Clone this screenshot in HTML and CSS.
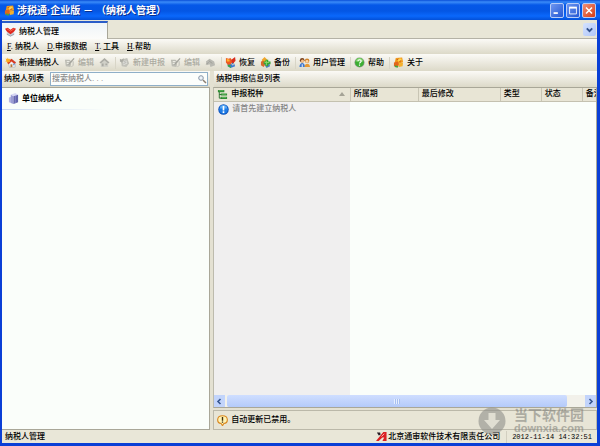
FILE: index.html
```html
<!DOCTYPE html>
<html lang="zh-CN">
<head>
<meta charset="utf-8">
<title>涉税通·企业版 - (纳税人管理)</title>
<link rel="stylesheet" href="styles.css">
</head>
<body>
<svg class="defs" aria-hidden="true">
  <symbol id="i-app" viewBox="0 0 12 12">
    <path d="M3 1l7-.5 1 5-5 2-4-2z" fill="#f39a1c"/><path d="M4 2l5-.4.6 2.6-3.4 1z" fill="#ffd34a"/>
    <path d="M1 6l4-1 2 3-2 3-4-1z" fill="#e2651b"/><path d="M6 7l5-1-.5 4-4 1z" fill="#f4b02b"/><path d="M2 9l4 1-1 1.600-3-.6z" fill="#46a53a"/>
    <path d="M4 3l2-1M7 5l2-1" stroke="#b83510" stroke-width=".9"/>
  </symbol>
  <symbol id="i-tab" viewBox="0 0 12 12">
    <path d="M2 7l4-2 4 2 0 2-4 2.500L2 9z" fill="#c9ccd4"/><path d="M2 9l4 2 4-2" fill="none" stroke="#8c909c" stroke-width=".8"/>
    <path d="M0 3l3-1 3 2 3-2 3 1-2 3-4 3-4-3z" fill="#e0271d"/><path d="M2 3l4 2.500 4-2.500" stroke="#ff8a6a" fill="none" stroke-width=".7"/>
  </symbol>
  <symbol id="i-new" viewBox="0 0 12 12">
    <path d="M3 5l5-2 4 3-1 5-6 .500z" fill="#eef0f4" stroke="#9aa0a8" stroke-width=".5"/><path d="M2 6l5-4 5 4-1.500 1.500L7 5 4 8z" fill="#d93a20"/>
    <path d="M3 .5l.8 1.700 2-.2L5 3.800l1 1.700-2-.2-1 1.700-.8-1.900L.3 5l1.200-1.500L.6 1.700l1.800.4z" fill="#ffae1c"/><path d="M6 8h2v3H6z" fill="#b97634"/><path d="M9 7h1.500v2H9z" fill="#568ac8"/>
  </symbol>
  <symbol id="i-edit" viewBox="0 0 12 12">
    <path d="M1 3l5 0 2 2-1 6-5-1z" fill="#bcbcb4"/><path d="M3 5h3M3 7h4" stroke="#f4f4ec"/><path d="M10.500 1l1 1-5 6-2 .7.700-2z" fill="#a4a49d"/><path d="M9 4l1 1v4l-2 2" fill="none" stroke="#bbbbb4"/>
  </symbol>
  <symbol id="i-house" viewBox="0 0 12 12">
    <path d="M2 6l4-3 4 3v5H2z" fill="#d0d0c8"/><path d="M.5 6L6 1l5.500 5-1.500 1-4-3.500L2 7z" fill="#adada6"/><path d="M3 7h2v3H3zM7 7h2v2H7z" fill="#a9a9a2"/>
  </symbol>
  <symbol id="i-doc" viewBox="0 0 12 12">
    <path d="M2 3l7-2 2 6-3 4-5-1z" fill="#c1c1b9"/><path d="M4 4l4-1 1 4-4 2z" fill="#dededa"/><path d="M1 2l2 1 2-2 0 3-2 2-2-1z" fill="#ababa4"/><path d="M5 5l3-1M5 7l3-1" stroke="#a9a9a2" stroke-width=".8"/>
  </symbol>
  <symbol id="i-send" viewBox="0 0 12 12">
    <path d="M1 5l4-3 5 3 1 4-5 2-1-3-3 1z" fill="#b9b9b2"/><path d="M4 4l4 3M1 8l3-2" stroke="#9e9e97"/>
  </symbol>
  <symbol id="i-restore" viewBox="0 0 12 12">
    <path d="M3 5l6-1 2 6-5 2-3-2z" fill="#3979d0"/><path d="M3 8l3 1 .5 3L3 10z" fill="#37a644"/><path d="M1 1l3 1 2-1 2 3-1 4-4 .500L1 6z" fill="#ee5921"/><path d="M2 2l3 1 0 2-3 0z" fill="#ffb32b"/>
    <path d="M7 3l4-3 .5 4-2 3-2-1z" fill="#d92d1d"/><path d="M7 7l1.500 2L11 5" stroke="#fff3c4" fill="none" stroke-width=".8"/>
  </symbol>
  <symbol id="i-backup" viewBox="0 0 12 12">
    <path d="M2 3l3-3 3 3-1 4H3z" fill="#f1a62a"/><path d="M1 5l3-1 2 4-2 3-3-2z" fill="#d96a2c"/><path d="M5 8l5-2 1 4-4 2z" fill="#4f7fcb"/><path d="M6 3h3v2h2.500v3H9v2H6V8H4V5h2z" fill="#36a531"/><path d="M7 4v5M5 6h5" stroke="#89d86c"/>
  </symbol>
  <symbol id="i-users" viewBox="0 0 12 12">
    <circle cx="3.500" cy="3.500" r="2.500" fill="#7a431d"/><circle cx="3.800" cy="4.300" r="1.700" fill="#f5c28f"/><path d="M.5 11c0-6 6-6 6 0z" fill="#3e78cf"/>
    <circle cx="8.800" cy="4" r="2.500" fill="#d2832a"/><circle cx="8.700" cy="4.800" r="1.600" fill="#ffd5a2"/><path d="M6 11c0-5 6-5 6 0z" fill="#e79933"/><path d="M3 8h1v3H3z" fill="#fff"/>
  </symbol>
  <symbol id="i-help" viewBox="0 0 12 12">
    <circle cx="6" cy="6" r="5.500" fill="#8c9a8b"/><circle cx="6" cy="6" r="4.800" fill="#3cae32"/><path d="M2 5a4 4 0 0 1 8 0z" fill="#7ed368"/>
    <path d="M4.200 4.700C4.300 2.400 8 2.500 7.800 4.700 7.700 5.700 6 5.800 6 7.200M6 8.200v1.300" stroke="#fff" stroke-width="1.300" fill="none"/>
  </symbol>
  <symbol id="i-cube" viewBox="0 0 12 12">
    <path d="M1 5l3-1v7l-3-1z" fill="#b6b7e2"/><path d="M3 2l3 1v9l-3-1z" fill="#9a9cd4"/><path d="M6 3l5-1v8l-5 2z" fill="#6365ac"/><path d="M3 2l5-2 3 2-5 1.500z" fill="#d7d8f4"/><path d="M8 3v8" stroke="#8789c8"/>
  </symbol>
  <symbol id="i-tree" viewBox="0 0 12 12">
    <path d="M1 1h7v2.500H1zM4 5h7v2H4zM4 8.500h7V11H4z" fill="#2f8f35"/><path d="M2.500 3v7H5M2.500 6H5" stroke="#246e2a" fill="none"/><path d="M2 1.800h5M5 5.700h5M5 9.300h5" stroke="#7cc66f" stroke-width=".6"/>
  </symbol>
  <symbol id="i-info" viewBox="0 0 12 12">
    <circle cx="6" cy="6" r="5.700" fill="#0d50b8"/><circle cx="6" cy="6" r="4.800" fill="#1d7be6"/><path d="M2 5a4 4 0 0 1 8 0z" fill="#5aa9f5"/><path d="M6 2.200v5M6 8v1.800" stroke="#fff" stroke-width="1.800"/>
  </symbol>
  <symbol id="i-warn" viewBox="0 0 12 12">
    <path d="M6 .8c7 0 6.500 8 1.500 8.500L6 11.700 4.500 9.300C-.5 8.800-1 .8 6 .8z" fill="#fff3b4" stroke="#d9871f" stroke-width="1.200"/><path d="M6 2.300v4M6 7v1.400" stroke="#43300c" stroke-width="1.500"/>
  </symbol>
  <symbol id="i-brand" viewBox="0 0 12 12">
    <path d="M1 1.500h3.500L5 4 3 5z" fill="#251b24"/><path d="M11.500 1v10H7L9 7H7L3 11H0L8 1z" fill="#db1f22"/><path d="M6 6l3-3" stroke="#fff" stroke-width=".7"/>
  </symbol>
</svg>
<div class="window">
  <header class="titlebar">
    <svg class="icon"><use href="#i-app"/></svg>
    <h1>涉税通·企业版 － （纳税人管理）</h1>
    <button class="win" aria-label="最小化"><svg viewBox="0 0 14 14"><path d="M3 10h5" stroke="#fff" stroke-width="2"/></svg></button>
    <button class="win" aria-label="最大化"><svg viewBox="0 0 14 14"><path d="M3 4h8v7H3z" fill="none" stroke="#fff"/><path d="M2.500 3.500h9" stroke="#fff" stroke-width="2"/></svg></button>
    <button class="win close" aria-label="关闭"><svg viewBox="0 0 14 14"><path d="M3.500 3.500l7 7M10.500 3.500l-7 7" stroke="#fff" stroke-width="1.800"/></svg></button>
  </header>
  <div class="tabs">
    <button class="tab"><svg class="icon"><use href="#i-tab"/></svg>纳税人管理</button>
    <button class="drop" aria-label="标签列表"><svg viewBox="0 0 12 12"><path d="M3.500 5L6 7.500 8.500 5" fill="none" stroke="#31518c" stroke-width="1.700"/></svg></button>
  </div>
  <nav class="menu">
    <button><span class="key"><u>F</u>.</span>纳税人</button>
    <button><span class="key"><u>D</u>.</span>申报数据</button>
    <button><span class="key"><u>T</u>.</span>工具</button>
    <button><span class="key"><u>H</u>.</span>帮助</button>
  </nav>
  <div class="toolbar">
    <button><svg class="icon"><use href="#i-new"/></svg>新建纳税人</button>
    <button disabled><svg class="icon"><use href="#i-edit"/></svg>编辑</button>
    <button disabled aria-label="删除"><svg class="icon"><use href="#i-house"/></svg></button>
    <span class="sep"></span>
    <button disabled><svg class="icon"><use href="#i-doc"/></svg>新建申报</button>
    <button disabled><svg class="icon"><use href="#i-edit"/></svg>编辑</button>
    <button disabled aria-label="发送"><svg class="icon"><use href="#i-send"/></svg></button>
    <span class="sep"></span>
    <button><svg class="icon"><use href="#i-restore"/></svg>恢复</button>
    <button><svg class="icon"><use href="#i-backup"/></svg>备份</button>
    <span class="sep"></span>
    <button><svg class="icon"><use href="#i-users"/></svg>用户管理</button>
    <span class="sep"></span>
    <button><svg class="icon"><use href="#i-help"/></svg>帮助</button>
    <span class="sep"></span>
    <button><svg class="icon"><use href="#i-app"/></svg>关于</button>
  </div>
  <main class="content">
    <section class="side">
      <div class="bar">
        <label for="q">纳税人列表</label>
        <div class="search">
          <input id="q" type="text" placeholder="搜索纳税人. . .">
          <svg viewBox="0 0 10 10"><circle cx="4" cy="4" r="2.300" fill="#eef4fa" stroke="#8795a6"/><path d="M6 6l3 3" stroke="#8d8072" stroke-width="1.500"/></svg>
        </div>
      </div>
      <div class="tree"><div class="node"><svg class="icon"><use href="#i-cube"/></svg>单位纳税人</div></div>
    </section>
    <section class="main">
      <h2 class="bar">纳税申报信息列表</h2>
      <div class="grid">
        <div class="rows">
          <table>
            <colgroup><col class="c1"><col class="c2"><col class="c3"><col class="c4"><col class="c4"><col></colgroup>
            <thead><tr>
              <th><div class="kind"><svg class="icon"><use href="#i-tree"/></svg>申报税种<span class="sort"></span></div></th>
              <th>所属期</th><th>最后修改</th><th>类型</th><th>状态</th><th>备注</th>
            </tr></thead>
            <tbody><tr><td><div class="kind"><svg class="icon"><use href="#i-info"/></svg>请首先建立纳税人</div></td><td></td><td></td><td></td><td></td><td></td></tr></tbody>
          </table>
        </div>
        <div class="scroll">
          <button aria-label="向左"><svg viewBox="0 0 11 11"><path d="M6.500 3L4 5.500 6.500 8" fill="none" stroke="#35558f" stroke-width="1.600"/></svg></button>
          <div class="thumb"><i></i></div>
          <button aria-label="向右"><svg viewBox="0 0 11 11"><path d="M4.500 3L7 5.500 4.500 8" fill="none" stroke="#35558f" stroke-width="1.600"/></svg></button>
        </div>
      </div>
      <div class="notice"><svg class="icon"><use href="#i-warn"/></svg>自动更新已禁用。</div>
    </section>
  </main>
  <footer class="status">
    <span class="where">纳税人管理</span>
    <span class="company"><svg class="icon"><use href="#i-brand"/></svg>北京通审软件技术有限责任公司</span>
    <time>2012-11-14 14:32:51</time>
  </footer>
  <div class="mark">
    <svg viewBox="0 0 28 28"><circle cx="14" cy="14" r="13.500" fill="#8f8f8b"/><path d="M10.500 6h7v7H22l-8 9-8-9h4.500z" fill="#dcdbd0"/></svg>
    <div><strong>当下软件园</strong><span>downxia.com</span></div>
  </div>
</div>
</body>
</html>
```
FILE: styles.css
```css
* { box-sizing: border-box; }
body {
  margin: 0;
  color: #000;
  font: 500 8px/12px "Liberation Sans", "Noto Sans CJK SC", sans-serif;
}
button, input { font: inherit; color: inherit; margin: 0; padding: 0; border: 0; background: none; }
.defs { position: absolute; width: 0; height: 0; }
.icon { width: 11px; height: 11px; flex: none; }

.window {
  position: relative;
  display: flex;
  flex-direction: column;
  min-height: 100vh;
  border: solid #0a3fd6;
  border-width: 0 3px 3px 2px;
  background: #ece9d8;
}

.titlebar {
  display: flex;
  align-items: center;
  gap: 2px;
  height: 20px;
  margin: 0 -3px 0 -2px;
  padding: 1px 4px 0;
  background: linear-gradient(#0a4fd8, #3a8bf8 2px, #0558e8 5px, #0456e4 11px, #0a68fc 16px, #0350d8);
  color: #fff;
}
.titlebar h1 {
  flex: 1;
  margin: 0;
  font-size: 10px;
  line-height: 16px;
  text-shadow: 1px 1px #0a2f8c;
}
.win {
  display: flex;
  width: 14px;
  height: 15px;
  border: 1px solid #b8ccf8;
  border-radius: 2px;
  background: linear-gradient(135deg, #6e96f0, #2458d4);
}
.win svg { width: 100%; height: 100%; }
.close { background: linear-gradient(135deg, #f09078, #d43c14); }

.tabs {
  display: flex;
  justify-content: space-between;
  height: 19px;
  border-bottom: 1px solid #b4b2a6;
  background: #e8e6d7;
}
.tab {
  display: flex;
  align-items: center;
  gap: 3px;
  width: 106px;
  height: 18px;
  margin-top: 1px;
  padding: 1px 0 0 3px;
  border-top: 2px solid #2a5cc8;
  border-right: 1px solid #a8a698;
  background: linear-gradient(#eef4f8, #fcfcfa);
}
.drop {
  width: 13px;
  height: 13px;
  margin: 3px 1px;
  border-radius: 2px;
  background: linear-gradient(135deg, #d4e2fe, #b0c6f8);
}
.drop svg, .scroll svg { display: block; width: 100%; }

.menu, .toolbar, .bar { background: linear-gradient(#fbfaf6, #dcd9c8); }
.menu { display: flex; gap: 8px; height: 15px; padding-left: 5px; }
.menu button, .toolbar button { display: flex; align-items: center; }
.key { width: 8px; font-family: "Liberation Serif", serif; text-align: left; }

.toolbar {
  display: flex;
  align-items: center;
  gap: 5px;
  height: 17px;
  padding-left: 3px;
}
.toolbar button { gap: 3px; }
.toolbar button:disabled { color: #aaa99f; }
.sep { width: 1px; height: 12px; margin-right: -2px; background: #d8d5c7; }

.content { flex: 1; display: flex; gap: 4px; background: #e4e1d2; }
.bar {
  display: flex;
  align-items: center;
  gap: 4px;
  height: 16px;
  margin: 0;
  padding-left: 2px;
  font-size: 8px;
  font-weight: 500;
}
.side { display: flex; flex-direction: column; width: 35%; }
.side .bar { gap: 6px; }
.search {
  flex: 1;
  display: flex;
  align-items: center;
  height: 14px;
  margin-right: 2px;
  border: 1px solid #8fafc8;
  background: #fcfefc;
}
.search input { flex: 1; min-width: 0; padding-left: 1px; outline: 0; }
.search input::placeholder { color: #8c8c8c; }
.search svg { width: 10px; height: 10px; }
.tree, .grid { flex: 1; border: 1px solid #a9a798; background: #fafefa; }
.tree { border-left: 0; }
.node {
  display: flex;
  align-items: center;
  gap: 3px;
  height: 22px;
  padding-left: 6px;
  border-bottom: 1px solid;
  border-image: linear-gradient(90deg, #c9d8f2, #fafefa 50%) 1;
  font-weight: bold;
}

.main { flex: 1; min-width: 0; display: flex; flex-direction: column; }
.grid { display: flex; flex-direction: column; border-left-color: #bdbbad; margin-left: -1px; }
.rows {
  flex: 1;
  overflow: hidden;
  background: linear-gradient(90deg, #f0efef 136px, transparent 136px);
}
table { width: 100%; table-layout: fixed; border-collapse: collapse; }
.c1 { width: 136px; }
.c2 { width: 68px; }
.c3 { width: 82px; }
.c4 { width: 41px; }
th {
  height: 13px;
  padding: 0 0 0 3px;
  border-right: 1px solid #c8c5b4;
  border-bottom: 1px solid #c4c1b0;
  background: #e8e5d5;
  font-weight: 500;
  text-align: left;
  white-space: nowrap;
}
th:last-child { border-right: 0; }
td { height: 16px; padding: 0 0 0 4px; color: #858585; }
.kind { display: flex; align-items: center; gap: 3px; }
.sort {
  margin: 0 5px 0 auto;
  border: solid transparent;
  border-width: 0 3px 4px;
  border-bottom-color: #a5a396;
}

.scroll { display: flex; height: 12px; background: #f2f1ea; }
.scroll button { width: 11px; background: #c2d4fb; }
.thumb {
  flex: 1;
  display: flex;
  justify-content: center;
  align-items: center;
  margin: 0 18px 0 2px;
  border-radius: 2px;
  background: linear-gradient(#cfdeff, #b4caf9);
}
.thumb i { width: 6px; height: 5px; background: repeating-linear-gradient(90deg, #e6efff 0 1px, #a7bff0 1px 2px); }

.notice {
  display: flex;
  align-items: center;
  gap: 3px;
  height: 20px;
  margin: 2px 0 0 -1px;
  padding-left: 3px;
  border: 1px solid #bbb8a9;
  background: #e8e5d6;
}

.status {
  display: flex;
  align-items: center;
  height: 13px;
  background: #e9e7d8;
  white-space: nowrap;
}
.where { flex: 1; padding-left: 3px; }
.company { display: flex; align-items: center; gap: 1px; padding-right: 6px; border-right: 1px solid #d2cfc0; }
.status time { padding: 0 5px; font-family: "Liberation Mono", monospace; font-size: 7px; }

.mark {
  position: absolute;
  right: 13px;
  bottom: 8px;
  display: flex;
  align-items: center;
  gap: 8px;
  opacity: .6;
  color: #85857f;
  pointer-events: none;
}
.mark svg { width: 28px; height: 28px; }
.mark div { display: flex; flex-direction: column; }
.mark strong { font-size: 14px; line-height: 15px; }
.mark span { font-size: 11px; font-weight: bold; line-height: 11px; }
```
